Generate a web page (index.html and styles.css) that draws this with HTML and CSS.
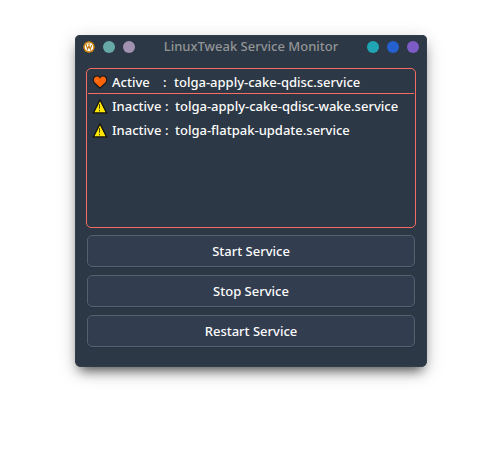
FILE: index.html
```html
<!DOCTYPE html>
<html lang="en">
<head>
<meta charset="utf-8">
<title>LinuxTweak Service Monitor</title>
<link rel="stylesheet" href="styles.css">
</head>
<body>
<main class="window">
  <header class="titlebar">
    <div class="dots">
      <svg class="app-icon" viewBox="0 0 12 12"><circle cx="6" cy="6" r="5.900" fill="#c77f0b"/><circle cx="6" cy="6" r="4.300" fill="#fff"/><path d="M3 3.200 4.500 8.200 6 4.800 7.300 8.400 8.700 4.200M4.600 3h2.800" fill="none" stroke="#c27a12" stroke-width="1.100"/></svg>
      <span class="dot sage"></span>
      <span class="dot mauve"></span>
    </div>
    <h1 class="title">LinuxTweak Service Monitor</h1>
    <div class="dots">
      <span class="dot teal"></span>
      <span class="dot blue"></span>
      <span class="dot violet"></span>
    </div>
  </header>
  <ul class="list">
    <li class="row selected">
      <svg class="icon" viewBox="0 0 14 14"><path d="M7 13.200.9 7.400C-.9 4.500.8.800 4 .8c1.400 0 2.400.7 3 1.700C7.600 1.500 8.600.8 10 .8c3.200 0 4.900 3.700 3.100 6.600Z" fill="#ff6508" stroke="#15191d" stroke-width="1.200"/><path d="M2.600 4.500 5 7" stroke="#ff8b45" stroke-width=".8"/></svg>
      <span class="state">Active</span><span class="colon active-colon">:</span><span class="name active-name">tolga-apply-cake-qdisc.service</span>
    </li>
    <li class="row">
      <svg class="icon" viewBox="0 0 14 14"><path d="M7 1 13.600 13.900H.4Z" fill="#ffe600" stroke="#111" stroke-width="1.200"/><path d="M6.500 5.200v4.500M6.500 10.800V12.300" stroke="#4b4508" stroke-width="1"/></svg>
      <span class="state">Inactive</span><span class="colon">:</span><span class="name">tolga-apply-cake-qdisc-wake.service</span>
    </li>
    <li class="row">
      <svg class="icon" viewBox="0 0 14 14"><path d="M7 1 13.600 13.900H.4Z" fill="#ffe600" stroke="#111" stroke-width="1.200"/><path d="M6.500 5.200v4.500M6.500 10.800V12.300" stroke="#4b4508" stroke-width="1"/></svg>
      <span class="state">Inactive</span><span class="colon">:</span><span class="name">tolga-flatpak-update.service</span>
    </li>
  </ul>
  <div class="actions">
    <button class="button">Start Service</button>
    <button class="button">Stop Service</button>
    <button class="button">Restart Service</button>
  </div>
</main>
</body>
</html>
```

FILE: styles.css
```css
* { box-sizing: border-box; }
body {
  margin: 0;
  height: 452px;
  padding: 35px 75px;
  background: #fff;
  font: 500 13px/24px "Noto Sans", sans-serif;
  color: #fcfcfc;
  overflow: hidden;
}
.window {
  width: 352px;
  height: 332px;
  padding: 0 11px;
  border-radius: 5px 5px 6px 6px;
  background: #2c3845;
  box-shadow: inset 0 0 0 1px #343e48, 0 8px 12px -5px rgba(0,0,0,.6), 0 5px 18px -1px rgba(0,0,0,.25);
}
.titlebar {
  display: flex;
  align-items: center;
  justify-content: space-between;
  height: 24px;
  margin: 0 -3px 9px;
}
.dots { display: flex; gap: 8px; }
.dot, .app-icon { width: 12px; height: 12px; border-radius: 50%; }
.sage { background: #67a9a7; }
.mauve { background: #a391b2; }
.teal { background: #20a5b5; }
.blue { background: #2460d0; }
.violet { background: #7d5bc6; }
.title { margin: 0 0 2px; font-size: 13px; font-weight: 500; line-height: 22px; color: #929496; }
.list {
  height: 160px;
  margin: 0;
  padding: 1px;
  list-style: none;
  border: 1px solid #f66c62;
  border-radius: 5px;
}
.row { display: flex; align-items: center; height: 24px; padding-left: 5px; white-space: nowrap; }
.selected { border-bottom: 1px solid #f66c62; }
.icon { width: 14px; height: 14px; margin-right: 5px; overflow: visible; }
.state { width: 53px; }
.colon { width: 10px; }
.active-colon { margin-left: -2px; }
.active-name { margin-left: 1px; }
.actions { display: grid; gap: 8px; padding: 7px 1px 0; }
.button {
  height: 32px;
  padding: 0;
  border: 1px solid #566170;
  border-radius: 5px;
  background: #333d50;
  color: inherit;
  font: inherit;
  line-height: 30px;
  box-shadow: 0 1px 1px #293340;
}
```
